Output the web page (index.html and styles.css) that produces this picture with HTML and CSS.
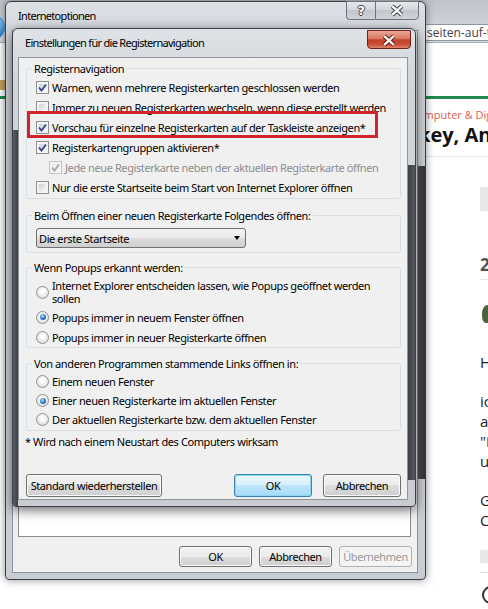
FILE: index.html
```html
<!DOCTYPE html>
<html lang="de">
<head>
  <meta charset="utf-8">
  <title>Einstellungen für die Registernavigation</title>
  <link rel="stylesheet" href="styles.css">
</head>
<body>

  <!-- browser page behind the dialogs -->
  <div class="browser">
    <div class="toolbar">
      <span class="back-btn"></span>
      <div class="address">seiten-auf-tablets.de</div>
    </div>
    <div class="site-header"><span class="logo"></span></div>
    <div class="article">
      <div class="category">Computer &amp; Digital</div>
      <h1 class="headline">key, Android</h1>
      <div class="article-body">
        <div class="grey-bar"></div>
        <h2 class="date">2013</h2>
        <div class="avatar"></div>
        <p>Hallo,</p>
        <p>ich habe<br>auf dem<br>"Internet<br>und dann</p>
        <p>Gruß<br>Christian</p>
        <div class="grey-bar low"></div>
        <div class="ring"></div>
      </div>
    </div>
  </div>

  <!-- Internetoptionen -->
  <div class="window outer">
    <div class="titlebar">
      <span class="title">Internetoptionen</span>
      <div class="caption">
        <span class="cap-btn help">?</span>
        <span class="cap-btn close">
          <svg viewBox="0 0 44 19"><path class="x-edge" d="M17 5 27 14M27 5 17 14"/><path class="x-fill" d="M17 5 27 14M27 5 17 14"/></svg>
        </span>
      </div>
    </div>
    <div class="client">
      <div class="tab-panel"></div>
      <div class="btn-row">
        <button class="btn small">OK</button>
        <button class="btn small">Abbrechen</button>
        <button class="btn small" disabled>Übernehmen</button>
      </div>
    </div>
  </div>

  <!-- Einstellungen für die Registernavigation -->
  <div class="window dialog">
    <div class="titlebar">
      <span class="title">Einstellungen für die Registernavigation</span>
      <span class="close-red">
        <svg viewBox="0 0 44 19"><path class="x-edge" d="M17 5 27 14M27 5 17 14"/><path class="x-fill" d="M17 5 27 14M27 5 17 14"/></svg>
      </span>
    </div>
    <div class="client">
      <fieldset class="group tabs">
        <legend>Registernavigation</legend>
        <div class="row"><span class="cb"><svg viewBox="0 0 11 11"><path d="M2 5.5 4.5 8.5 9 2.5"/></svg></span>Warnen, wenn mehrere Registerkarten geschlossen werden</div>
        <div class="row"><span class="cb"></span>Immer zu neuen Registerkarten wechseln, wenn diese erstellt werden</div>
        <div class="row"><span class="cb"><svg viewBox="0 0 11 11"><path d="M2 5.5 4.5 8.5 9 2.5"/></svg></span>Vorschau für einzelne Registerkarten auf der Taskleiste anzeigen*</div>
        <div class="row"><span class="cb"><svg viewBox="0 0 11 11"><path d="M2 5.5 4.5 8.5 9 2.5"/></svg></span>Registerkartengruppen aktivieren*</div>
        <div class="row indent disabled"><span class="cb"><svg viewBox="0 0 11 11"><path d="M2 5.5 4.5 8.5 9 2.5"/></svg></span>Jede neue Registerkarte neben der aktuellen Registerkarte öffnen</div>
        <div class="row"><span class="cb"></span>Nur die erste Startseite beim Start von Internet Explorer öffnen</div>
      </fieldset>

      <fieldset class="group newtab">
        <legend>Beim Öffnen einer neuen Registerkarte Folgendes öffnen:</legend>
        <div class="combo"><span>Die erste Startseite</span><span class="arrow"></span></div>
      </fieldset>

      <fieldset class="group popups">
        <legend>Wenn Popups erkannt werden:</legend>
        <div class="row tall"><span class="rb"></span><span>Internet Explorer entscheiden lassen, wie Popups geöffnet werden<br>sollen</span></div>
        <div class="row"><span class="rb on"></span>Popups immer in neuem Fenster öffnen</div>
        <div class="row"><span class="rb"></span>Popups immer in neuer Registerkarte öffnen</div>
      </fieldset>

      <fieldset class="group links">
        <legend>Von anderen Programmen stammende Links öffnen in:</legend>
        <div class="row"><span class="rb"></span>Einem neuen Fenster</div>
        <div class="row"><span class="rb on"></span>Einer neuen Registerkarte im aktuellen Fenster</div>
        <div class="row"><span class="rb"></span>Der aktuellen Registerkarte bzw. dem aktuellen Fenster</div>
      </fieldset>

      <p class="note">* Wird nach einem Neustart des Computers wirksam</p>

      <div class="btn-row">
        <button class="btn wide">Standard wiederherstellen</button>
        <button class="btn default">OK</button>
        <button class="btn">Abbrechen</button>
      </div>
    </div>
  </div>

  <div class="highlight"></div>

</body>
</html>
```

FILE: styles.css
```css
* {
  box-sizing: border-box;
}

body {
  margin: 0;
  width: 488px;
  height: 609px;
  overflow: hidden;
  position: relative;
  background-color: #fff;
  font-family: "Noto Sans", "Open Sans", sans-serif;
  font-size: 11px;
  color: #000;
}

/* ---------- browser page in the background ---------- */

.toolbar {
  height: 43px;
  display: flex;
  align-items: flex-end;
  padding-bottom: 1px;
  background: linear-gradient(#bfc4ca, #d9dde2);
  border-bottom: 1px solid #a7adb4;
}

.back-btn {
  width: 26px;
  height: 26px;
  margin-left: -21px;
  margin-bottom: 1px;
  border-radius: 50%;
  background: radial-gradient(circle at 65% 35%, #8fd0ff, #1f6fc4 70%);
}

.address {
  margin-left: auto;
  width: 68px;
  height: 17px;
  padding-left: 6px;
  background-color: #fff;
  border: 1px solid #8d959e;
  border-right: none;
  font-family: "Open Sans", sans-serif;
  font-size: 12px;
  line-height: 15px;
  color: #444;
  white-space: nowrap;
  overflow: hidden;
}

.site-header {
  height: 56px;
  display: flex;
  align-items: flex-end;
  padding-bottom: 6px;
  border-bottom: 3px solid #1f8a4c;
}

.logo {
  width: 6px;
  height: 10px;
  background-color: #c9a063;
}

.article {
  padding-left: 419px;
  font-family: "Open Sans", sans-serif;
  white-space: nowrap;
  overflow: hidden;
}

.category {
  margin: 9px 0 0 -9px;
  font-size: 11px;
  line-height: 13px;
  color: #e0604f;
}

.headline {
  margin: 2px 0 0 -1px;
  padding-bottom: 10px;
  font-size: 20px;
  line-height: 23px;
  color: #111;
  border-bottom: 1px solid #e6e6e6;
}

.article-body {
  padding-left: 61px;
  color: #222;
}

.grey-bar {
  height: 24px;
  margin-top: 30px;
  background-color: #e8e8e8;
}

.grey-bar.low {
  height: 22px;
  margin-top: 20px;
  border-bottom: 9px solid #fff;
  box-shadow: 0 1px 0 #e0e0e0;
}

.date {
  margin: 43px 0 0;
  padding-bottom: 3px;
  font-size: 17px;
  line-height: 22px;
  color: #555;
  border-bottom: 1px solid #e8e8e8;
}

.avatar {
  width: 10px;
  height: 18px;
  margin-top: 25px;
  margin-left: 2px;
  border-radius: 50% 50% 40% 40%;
  background-color: #4a6438;
}

.article-body p {
  margin: 19px 0 0;
  font-size: 15px;
  line-height: 20px;
}

.article-body p:first-of-type {
  margin-top: 29px;
}

.ring {
  width: 18px;
  height: 18px;
  margin-top: 14px;
  margin-left: 2px;
  border: 2px solid #333;
  border-radius: 50%;
}

/* ---------- windows ---------- */

.window {
  position: absolute;
  display: flex;
  flex-direction: column;
  border: 1px solid #3b3f44;
  border-radius: 6px 6px 4px 4px;
  letter-spacing: -0.4px;
}

.titlebar {
  height: 28px;
  flex-shrink: 0;
  display: flex;
  align-items: flex-start;
}

.title {
  padding-top: 6px;
  line-height: 15px;
  letter-spacing: -0.7px;
  white-space: nowrap;
}

.outer {
  left: 5px;
  top: 1px;
  width: 421px;
  height: 579px;
  padding: 0 7px 6px 6px;
  background: linear-gradient(#dde1e6, #cbd0d6 60px, #c8cdd3);
  box-shadow: 0 0 8px rgba(0, 0, 0, 0.45);
}

.outer::after {
  content: "";
  position: absolute;
  right: 0;
  top: 164px;
  bottom: 100px;
  width: 7px;
  background: linear-gradient(90deg, #4a4e53, #2f3236);
}

.outer .title {
  padding-left: 6px;
}

.caption {
  margin-left: auto;
  margin-top: -1px;
  margin-right: -1px;
  display: flex;
}

.cap-btn {
  height: 19px;
  display: flex;
  align-items: center;
  justify-content: center;
  border: 1px solid #6f757c;
  background: linear-gradient(#e6e9ed, #d3d7dc 45%, #c1c6cc 50%, #cfd4d9);
}

.cap-btn.help {
  width: 29px;
  border-right: none;
  border-radius: 0 0 0 4px;
  font-family: "DejaVu Sans", sans-serif;
  font-size: 13px;
  font-weight: bold;
  color: #fff;
  text-shadow: -1px 0 #40454b, 1px 0 #40454b, 0 -1px #40454b, 0 1px #40454b;
}

.cap-btn.close {
  width: 44px;
  border-radius: 0 0 4px 0;
}

.cap-btn svg,
.close-red svg {
  width: 44px;
  height: 19px;
}

.x-edge {
  stroke: #3c4147;
  stroke-width: 4.5;
  fill: none;
}

.x-fill {
  stroke: #fff;
  stroke-width: 2.4;
  fill: none;
}

.close-red .x-edge {
  stroke: #5e1a0e;
}

.outer .client {
  flex: 1;
  display: flex;
  flex-direction: column;
  padding: 0 5px 5px 5px;
  background-color: #f0f0f0;
  border: 1px solid #8c939b;
}

.tab-panel {
  flex: 1;
  margin-right: 1px;
  background-color: #fff;
  border: 1px solid #898c95;
}

.outer .btn-row {
  margin-top: 9px;
  justify-content: flex-end;
  gap: 7px;
}

.dialog {
  left: 12px;
  top: 28px;
  width: 404px;
  height: 479px;
  padding: 0 7px 6px 5px;
  background: linear-gradient(#dfe2e6, #d0d4d9 60px, #c9cdd2);
  box-shadow: 0 3px 12px rgba(0, 0, 0, 0.6);
}

.dialog::before {
  content: "";
  position: absolute;
  left: 0;
  top: 101px;
  bottom: 0;
  width: 5px;
  background: linear-gradient(90deg, #5b5f64, #3b3f44);
}

.dialog::after {
  content: "";
  position: absolute;
  right: 0;
  top: 136px;
  bottom: 26px;
  width: 7px;
  background: linear-gradient(90deg, #3d4146, #55595e);
}

.dialog .title {
  padding-left: 7px;
}

.close-red {
  width: 44px;
  height: 19px;
  margin-left: auto;
  margin-top: 1px;
  margin-right: -3px;
  display: flex;
  border: 1px solid #6d2117;
  border-radius: 0 0 4px 4px;
  background: linear-gradient(#e9a896, #d97760 45%, #c4402a 52%, #c9503a 80%, #e2866a);
}

.dialog .client {
  flex: 1;
  display: flex;
  flex-direction: column;
  padding: 3px 6px 0 7px;
  background-color: #f0f0f0;
  border: 1px solid #8e959c;
}

/* ---------- group boxes ---------- */

.group {
  margin: 0;
  min-width: 0;
  padding: 1px 8px 1px 9px;
  border: 1px solid #d5dfe5;
  border-radius: 3px;
}

.group legend {
  margin-left: -4px;
  padding: 0 2px;
  line-height: 15px;
}

.group.newtab {
  margin-top: 9px;
  padding: 5px 8px 4px 9px;
}

.group.popups {
  margin-top: 7px;
  padding: 4px 8px 0 9px;
}

.group.links {
  margin-top: 8px;
}

.group.links .row {
  height: 19px;
}

.row {
  height: 20px;
  display: flex;
  align-items: center;
  gap: 3px;
  white-space: nowrap;
}

.row.tall {
  height: 26px;
  margin-bottom: 2px;
  line-height: 13px;
}

.row.indent {
  padding-left: 13px;
}

.row.disabled {
  color: #8d8d8d;
}

/* checkbox */
.cb {
  width: 13px;
  height: 13px;
  flex-shrink: 0;
  display: flex;
  align-items: center;
  justify-content: center;
  padding: 2px;
  border: 1px solid #8e8f8f;
  background: linear-gradient(135deg, #cdd1d6, #f8f8f8) content-box, #f4f4f4;
}

.cb svg {
  width: 11px;
  height: 11px;
  margin: -2px;
  flex-shrink: 0;
}

.cb path {
  fill: none;
  stroke: #33478a;
  stroke-width: 1.9;
}

.disabled .cb {
  border-color: #c3c3c3;
  background: linear-gradient(135deg, #e6e6e6, #f8f8f8) content-box, #f4f4f4;
}

.disabled .cb path {
  stroke: #a6a6a6;
}

/* radio button */
.rb {
  width: 13px;
  height: 13px;
  flex-shrink: 0;
  display: flex;
  align-items: center;
  justify-content: center;
  border: 1px solid #8e8f8f;
  border-radius: 50%;
  background: radial-gradient(circle at 50% 40%, #fdfdfd 20%, #dcdcdc 80%);
}

.rb.on::after {
  content: "";
  width: 6px;
  height: 6px;
  border-radius: 50%;
  background: radial-gradient(circle at 40% 35%, #b3e1ff, #2a6fc0 55%, #164f96);
}

/* dropdown */
.combo {
  width: 210px;
  height: 20px;
  display: flex;
  align-items: center;
  justify-content: space-between;
  padding: 0 5px 0 2px;
  border: 1px solid #707070;
  border-radius: 3px;
  background: linear-gradient(#f2f2f2, #ebebeb 50%, #dddddd 50%, #cfcfcf);
}

.arrow {
  width: 0;
  height: 0;
  border-left: 3.5px solid transparent;
  border-right: 3.5px solid transparent;
  border-top: 4px solid #000;
}

.note {
  margin: 3px 0 0 -1px;
  line-height: 15px;
}

/* ---------- buttons ---------- */

.btn-row {
  display: flex;
  gap: 11px;
}

.dialog .btn-row {
  margin-top: 25px;
}

.btn {
  width: 78px;
  height: 23px;
  padding: 0;
  font: inherit;
  letter-spacing: inherit;
  white-space: nowrap;
  color: #000;
  border: 1px solid #707070;
  border-radius: 3px;
  background: linear-gradient(#f2f2f2, #ebebeb 50%, #dddddd 50%, #cfcfcf);
  box-shadow: inset 0 0 0 1px #fbfbfb;
}

.btn.small {
  width: 73px;
  height: 21px;
}

.btn.wide {
  width: 136px;
  margin-right: auto;
}

.btn.default {
  border-color: #3c7fb1;
  background: linear-gradient(#eaf6fd, #d9f0fc 50%, #bee6fd 50%, #a7d9f5);
  box-shadow: inset 0 0 0 1px #8ed6f7;
}

.btn:disabled {
  color: #9a9a9a;
  border-color: #adb2b5;
  background: #f4f4f4;
  box-shadow: none;
}

/* red marker drawn over the screenshot */
.highlight {
  position: absolute;
  left: 27px;
  top: 111px;
  width: 351px;
  height: 27px;
  border: 3px solid #d2232a;
}
```
